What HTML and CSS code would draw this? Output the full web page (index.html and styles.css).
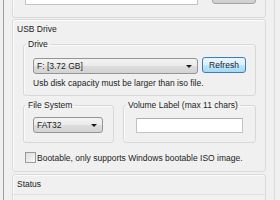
FILE: index.html
```html
<!DOCTYPE html>
<html lang="en">
<head>
    <meta charset="UTF-8">
    <title>ISO to USB</title>
    <link rel="stylesheet" href="styles.css">
</head>
<body>
    <div class="window">
        <div class="section top">
            <div class="row">
                <input type="text" class="textbox iso-path">
                <button class="btn" title="Browse"></button>
            </div>
        </div>

        <div class="section usb">
            <div class="section-title">USB Drive</div>

            <fieldset class="group drive">
                <legend>Drive</legend>
                <div class="row drive-row">
                    <div class="combo drive-combo">F: [3.72 GB]<span class="arrow"></span></div>
                    <button class="btn hot">Refresh</button>
                </div>
                <p class="hint">Usb disk capacity must be larger than iso file.</p>
            </fieldset>

            <div class="group-row">
                <fieldset class="group fs">
                    <legend>File System</legend>
                    <div class="combo fs-combo">FAT32<span class="arrow"></span></div>
                </fieldset>
                <fieldset class="group vol">
                    <legend>Volume Label (max 11 chars)</legend>
                    <input type="text" class="textbox vol-input">
                </fieldset>
            </div>

            <label class="check">
                <span class="box"></span>
                Bootable, only supports Windows bootable ISO image.
            </label>
        </div>

        <div class="section status">
            <div class="section-title">Status</div>
            <div class="status-box"></div>
        </div>
    </div>
</body>
</html>
```

FILE: styles.css
```css
* {
    box-sizing: border-box;
}

body {
    margin: 0;
    background-color: #f0f0f0;
    font-family: "Liberation Sans", Arial, sans-serif;
    font-size: 8.5px;
    line-height: 10px;
    color: #222;
    overflow: hidden;
}

.window {
    margin-left: 3px;
    width: 272px;
    height: 200px;
    padding: 0 8px;
    border-left: 1px solid #9d9d9d;
    border-right: 1px solid #d9dde2;
    overflow: hidden;
}

.section {
    border: 1px solid #dadada;
    border-radius: 3px;
    box-shadow: inset 1px 1px 0 #fbfbfb;
}

.section.top {
    margin-top: -20px;
    height: 38px;
}

.section.usb {
    margin-top: 1px;
    padding-bottom: 8px;
}

.section.status {
    margin-top: 2px;
    height: 60px;
}

.section-title {
    padding: 4px 0 0 4px;
}

.row {
    display: flex;
    align-items: flex-start;
}

.section.top .row {
    padding-left: 12px;
    padding-top: 3px;
}

.textbox {
    display: block;
    margin: 0;
    padding: 0;
    background: #fff;
    border: 1px solid #c0c3ca;
    border-top-color: #abadb3;
    border-radius: 1px;
}

.iso-path {
    width: 173px;
    height: 21px;
}

.btn {
    font: inherit;
    color: inherit;
    margin: 0;
    padding: 0;
    border: 1px solid #8f8f8f;
    border-radius: 3px;
    background: linear-gradient(#f2f2f2, #ebebeb 50%, #dddddd 51%, #cfcfcf);
}

.section.top .btn {
    margin-left: 14px;
    width: 44px;
    height: 20px;
    border-color: #a5a5a5;
}

.btn.hot {
    margin-left: 4px;
    margin-top: -1px;
    width: 44px;
    height: 16px;
    border-color: #3c7fb1;
    background: linear-gradient(#eaf6fd, #d9f0fc 50%, #bee6fd 51%, #a7d9f5);
}

.group {
    margin: 0;
    padding: 0;
    min-width: 0;
    border: 1px solid #d8d8d8;
    border-radius: 3px;
    box-shadow: inset 1px 1px 0 #fbfbfb;
}

.group legend {
    margin-left: 2px;
    padding: 0 2px;
    line-height: 10px;
}

.group.drive {
    margin: 5px 9px 0 10px;
}

.drive-row {
    margin: 9px 0 0 9px;
}

.combo {
    position: relative;
    height: 16px;
    padding: 0 0 0 3px;
    line-height: 14px;
    border: 1px solid #959595;
    border-radius: 3px;
    background: linear-gradient(#f3f3f3, #ebebeb 50%, #dddddd 51%, #d3d3d3);
}

.arrow {
    position: absolute;
    right: 5px;
    top: 6px;
    border-left: 3px solid transparent;
    border-right: 3px solid transparent;
    border-top: 3px solid #1a1a1a;
}

.drive-combo {
    width: 165px;
}

.hint {
    margin: 4px 0 7px 9px;
}

.group-row {
    display: flex;
    margin: 4px 9px 0 10px;
}

.group.fs {
    width: 91px;
}

.group.vol {
    flex: 1;
    margin-left: 9px;
}

.fs-combo {
    width: 70px;
    margin: 7px 0 9px 9px;
}

.vol-input {
    width: 107px;
    height: 15px;
    margin: 8px 0 0 12px;
}

.check {
    display: flex;
    align-items: center;
    margin-top: 9px;
    height: 11px;
}

.check .box {
    width: 11px;
    height: 11px;
    margin: 0 1px 0 12px;
    border: 1px solid #9a9b9b;
    background: linear-gradient(135deg, #dedede, #f8f8f8);
}

.status-box {
    margin-top: 5px;
    height: 30px;
    border-top: 1px solid #e0e0e0;
}
```
